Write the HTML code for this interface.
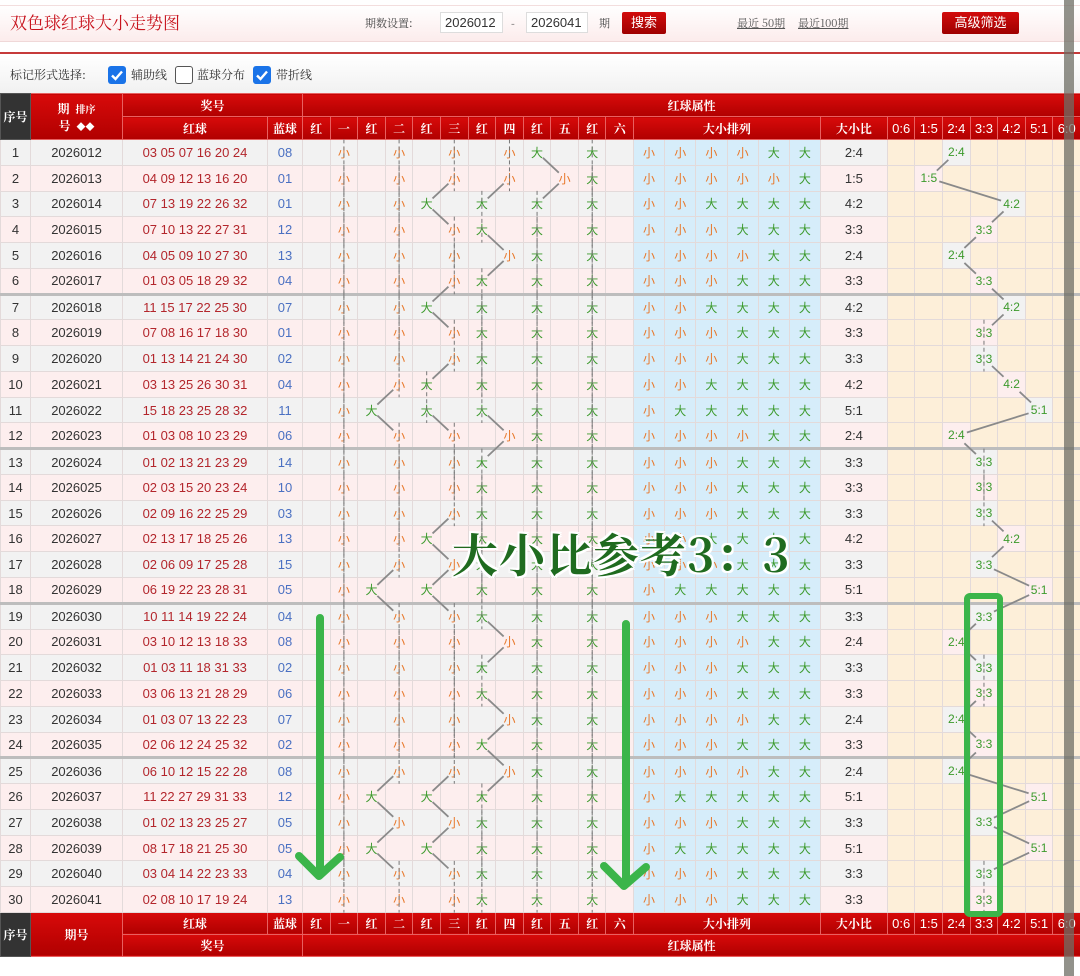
<!DOCTYPE html>
<html><head><meta charset="utf-8">
<style>
*{box-sizing:border-box;margin:0;padding:0}
body{width:1080px;height:976px;background:#fff;font-family:"Liberation Sans","Noto Sans CJK SC",sans-serif;position:relative;overflow:hidden}
.top{position:absolute;left:0;top:5px;width:1080px;height:37px;background:linear-gradient(#fff,#fcecec);border-top:1px solid #f3dede;border-bottom:1px solid #f0d8d8}
.title{position:absolute;left:10px;top:9px;font:17px "Noto Serif CJK SC",serif;color:#c8141e}
.t{position:absolute;font-size:11px;color:#444;font-family:"Noto Serif CJK SC",serif}
.inp{position:absolute;top:12px;height:21px;border:1px solid #ddd;background:#fff;font-size:13px;color:#333;padding:2px 0 0 4px}
.btn{position:absolute;top:12px;height:22px;background:linear-gradient(#d20c0c,#9e0000);color:#fff;font-size:13px;text-align:center;line-height:22px;border-radius:2px}
.redline{position:absolute;left:0;top:52px;width:1080px;height:2px;background:#c63a3a}
.opt{position:absolute;left:0;top:55px;width:1080px;height:38px;background:linear-gradient(#fff,#f1f1f1)}
.cb{position:absolute;top:66px;width:18px;height:18px;border-radius:3px}
.cb.on{background:#1a73e8}
.cb.off{border:1.5px solid #555;background:#fff}
.ot{position:absolute;top:66px;font:12px "Noto Serif CJK SC",serif;color:#333}
table{position:absolute;left:0;top:93px;border-collapse:collapse;table-layout:fixed;width:1080px}
th{background:linear-gradient(#d80a0a,#b00000);color:#fff;font:bold 12px "Noto Serif CJK SC",serif;border:1px solid #e86060;height:23px;padding:0;white-space:nowrap;overflow:hidden}
th.dk{background:#333;border-color:#555}
th.n{font:13px "Liberation Sans",sans-serif}
tfoot th{height:22px}
td{height:25.77px;text-align:center;border:1px solid #e3dada;font-size:13px;color:#333;padding:0;white-space:nowrap;overflow:hidden}
tbody tr:nth-child(odd){background:#f2f2f2}
tbody tr:nth-child(even){background:#fdeeee}
td:nth-child(3){color:#b3262c}
td:nth-child(4){color:#4a70c2}
td:nth-child(n+17):nth-child(-n+22){background:#d6edfa}
td:nth-child(n+24){background:#fdefd9}
td:nth-child(n+24).g{background:transparent;font-size:12px}
td.o{color:#e8782a;font-family:"Noto Sans CJK SC",sans-serif;font-size:12px}
td.g{color:#3c9a2c;font-family:"Noto Sans CJK SC",sans-serif;font-size:12px}
td:nth-child(n+24).g{font-family:"Liberation Sans",sans-serif}
tr.s td{border-bottom:3px solid #bdbdbd}
#ln{position:absolute;left:0;top:0}
.ann{position:absolute;left:452px;top:520px;font:bold 46px "Noto Serif CJK SC",serif;color:#1f6b1f;letter-spacing:1px;text-shadow:-2px -2px 0 #fff,2px -2px 0 #fff,-2px 2px 0 #fff,2px 2px 0 #fff,0 2px 0 #fff,0 -2px 0 #fff,2px 0 0 #fff,-2px 0 0 #fff}
.sb{position:absolute;left:1064px;top:0;width:10px;height:976px;background:rgba(110,110,100,.75)}
</style></head><body>
<div class="top"></div>
<div class="title">双色球红球大小走势图</div>
<div class="t" style="left:365px;top:15px">期数设置:</div>
<div class="inp" style="left:440px;width:63px">2026012</div>
<div class="t" style="left:511px;top:15px">-</div>
<div class="inp" style="left:526px;width:62px">2026041</div>
<div class="t" style="left:599px;top:15px">期</div>
<div class="btn" style="left:622px;width:44px">搜索</div>
<div class="t" style="left:737px;top:15px;text-decoration:underline;color:#555">最近 50期</div>
<div class="t" style="left:798px;top:15px;text-decoration:underline;color:#555">最近100期</div>
<div class="btn" style="left:942px;width:77px">高级筛选</div>
<div class="redline"></div>
<div class="opt"></div>
<div class="ot" style="left:10px">标记形式选择:</div>
<div class="cb on" style="left:108px"><svg width="18" height="18"><path d="M4 9.5l3.5 3.5L14 5.5" stroke="#fff" stroke-width="2.4" fill="none"/></svg></div>
<div class="ot" style="left:131px">辅助线</div>
<div class="cb off" style="left:175px"></div>
<div class="ot" style="left:197px">蓝球分布</div>
<div class="cb on" style="left:253px"><svg width="18" height="18"><path d="M4 9.5l3.5 3.5L14 5.5" stroke="#fff" stroke-width="2.4" fill="none"/></svg></div>
<div class="ot" style="left:276px">带折线</div>

<table id="tb">
<colgroup><col style="width:30px"><col style="width:92px"><col style="width:145px"><col style="width:35px">
<col style="width:27.6px"><col style="width:27.6px"><col style="width:27.6px"><col style="width:27.6px"><col style="width:27.6px"><col style="width:27.6px"><col style="width:27.6px"><col style="width:27.6px"><col style="width:27.6px"><col style="width:27.6px"><col style="width:27.5px"><col style="width:27.5px">
<col style="width:31.2px"><col style="width:31.2px"><col style="width:31.2px"><col style="width:31.2px"><col style="width:31.1px"><col style="width:31.1px">
<col style="width:67px">
<col style="width:27.6px"><col style="width:27.6px"><col style="width:27.6px"><col style="width:27.6px"><col style="width:27.6px"><col style="width:27.5px"><col style="width:27.5px">
</colgroup>
<thead>
<tr><th rowspan="2" class="dk">序号</th><th rowspan="2">期&nbsp;&nbsp;<span style="font-size:10px">排序</span><br>号&nbsp;&nbsp;<span style="font-size:9px">◆◆</span></th><th colspan="2">奖号</th><th colspan="26">红球属性</th></tr>
<tr><th>红球</th><th>蓝球</th><th>红</th><th>一</th><th>红</th><th>二</th><th>红</th><th>三</th><th>红</th><th>四</th><th>红</th><th>五</th><th>红</th><th>六</th><th colspan="6">大小排列</th><th>大小比</th><th class="n">0:6</th><th class="n">1:5</th><th class="n">2:4</th><th class="n">3:3</th><th class="n">4:2</th><th class="n">5:1</th><th class="n">6:0</th></tr>
</thead>
<tbody>
<tr><td>1<td>2026012<td>03 05 07 16 20 24<td>08<td><td class=o>小<td><td class=o>小<td><td class=o>小<td><td class=o>小<td class=g>大<td><td class=g>大<td><td class=o>小<td class=o>小<td class=o>小<td class=o>小<td class=g>大<td class=g>大<td>2:4<td><td><td class=g>2:4<td><td><td><td></tr>
<tr><td>2<td>2026013<td>04 09 12 13 16 20<td>01<td><td class=o>小<td><td class=o>小<td><td class=o>小<td><td class=o>小<td><td class=o>小<td class=g>大<td><td class=o>小<td class=o>小<td class=o>小<td class=o>小<td class=o>小<td class=g>大<td>1:5<td><td class=g>1:5<td><td><td><td><td></tr>
<tr><td>3<td>2026014<td>07 13 19 22 26 32<td>01<td><td class=o>小<td><td class=o>小<td class=g>大<td><td class=g>大<td><td class=g>大<td><td class=g>大<td><td class=o>小<td class=o>小<td class=g>大<td class=g>大<td class=g>大<td class=g>大<td>4:2<td><td><td><td><td class=g>4:2<td><td></tr>
<tr><td>4<td>2026015<td>07 10 13 22 27 31<td>12<td><td class=o>小<td><td class=o>小<td><td class=o>小<td class=g>大<td><td class=g>大<td><td class=g>大<td><td class=o>小<td class=o>小<td class=o>小<td class=g>大<td class=g>大<td class=g>大<td>3:3<td><td><td><td class=g>3:3<td><td><td></tr>
<tr><td>5<td>2026016<td>04 05 09 10 27 30<td>13<td><td class=o>小<td><td class=o>小<td><td class=o>小<td><td class=o>小<td class=g>大<td><td class=g>大<td><td class=o>小<td class=o>小<td class=o>小<td class=o>小<td class=g>大<td class=g>大<td>2:4<td><td><td class=g>2:4<td><td><td><td></tr>
<tr class=s><td>6<td>2026017<td>01 03 05 18 29 32<td>04<td><td class=o>小<td><td class=o>小<td><td class=o>小<td class=g>大<td><td class=g>大<td><td class=g>大<td><td class=o>小<td class=o>小<td class=o>小<td class=g>大<td class=g>大<td class=g>大<td>3:3<td><td><td><td class=g>3:3<td><td><td></tr>
<tr><td>7<td>2026018<td>11 15 17 22 25 30<td>07<td><td class=o>小<td><td class=o>小<td class=g>大<td><td class=g>大<td><td class=g>大<td><td class=g>大<td><td class=o>小<td class=o>小<td class=g>大<td class=g>大<td class=g>大<td class=g>大<td>4:2<td><td><td><td><td class=g>4:2<td><td></tr>
<tr><td>8<td>2026019<td>07 08 16 17 18 30<td>01<td><td class=o>小<td><td class=o>小<td><td class=o>小<td class=g>大<td><td class=g>大<td><td class=g>大<td><td class=o>小<td class=o>小<td class=o>小<td class=g>大<td class=g>大<td class=g>大<td>3:3<td><td><td><td class=g>3:3<td><td><td></tr>
<tr><td>9<td>2026020<td>01 13 14 21 24 30<td>02<td><td class=o>小<td><td class=o>小<td><td class=o>小<td class=g>大<td><td class=g>大<td><td class=g>大<td><td class=o>小<td class=o>小<td class=o>小<td class=g>大<td class=g>大<td class=g>大<td>3:3<td><td><td><td class=g>3:3<td><td><td></tr>
<tr><td>10<td>2026021<td>03 13 25 26 30 31<td>04<td><td class=o>小<td><td class=o>小<td class=g>大<td><td class=g>大<td><td class=g>大<td><td class=g>大<td><td class=o>小<td class=o>小<td class=g>大<td class=g>大<td class=g>大<td class=g>大<td>4:2<td><td><td><td><td class=g>4:2<td><td></tr>
<tr><td>11<td>2026022<td>15 18 23 25 28 32<td>11<td><td class=o>小<td class=g>大<td><td class=g>大<td><td class=g>大<td><td class=g>大<td><td class=g>大<td><td class=o>小<td class=g>大<td class=g>大<td class=g>大<td class=g>大<td class=g>大<td>5:1<td><td><td><td><td><td class=g>5:1<td></tr>
<tr class=s><td>12<td>2026023<td>01 03 08 10 23 29<td>06<td><td class=o>小<td><td class=o>小<td><td class=o>小<td><td class=o>小<td class=g>大<td><td class=g>大<td><td class=o>小<td class=o>小<td class=o>小<td class=o>小<td class=g>大<td class=g>大<td>2:4<td><td><td class=g>2:4<td><td><td><td></tr>
<tr><td>13<td>2026024<td>01 02 13 21 23 29<td>14<td><td class=o>小<td><td class=o>小<td><td class=o>小<td class=g>大<td><td class=g>大<td><td class=g>大<td><td class=o>小<td class=o>小<td class=o>小<td class=g>大<td class=g>大<td class=g>大<td>3:3<td><td><td><td class=g>3:3<td><td><td></tr>
<tr><td>14<td>2026025<td>02 03 15 20 23 24<td>10<td><td class=o>小<td><td class=o>小<td><td class=o>小<td class=g>大<td><td class=g>大<td><td class=g>大<td><td class=o>小<td class=o>小<td class=o>小<td class=g>大<td class=g>大<td class=g>大<td>3:3<td><td><td><td class=g>3:3<td><td><td></tr>
<tr><td>15<td>2026026<td>02 09 16 22 25 29<td>03<td><td class=o>小<td><td class=o>小<td><td class=o>小<td class=g>大<td><td class=g>大<td><td class=g>大<td><td class=o>小<td class=o>小<td class=o>小<td class=g>大<td class=g>大<td class=g>大<td>3:3<td><td><td><td class=g>3:3<td><td><td></tr>
<tr><td>16<td>2026027<td>02 13 17 18 25 26<td>13<td><td class=o>小<td><td class=o>小<td class=g>大<td><td class=g>大<td><td class=g>大<td><td class=g>大<td><td class=o>小<td class=o>小<td class=g>大<td class=g>大<td class=g>大<td class=g>大<td>4:2<td><td><td><td><td class=g>4:2<td><td></tr>
<tr><td>17<td>2026028<td>02 06 09 17 25 28<td>15<td><td class=o>小<td><td class=o>小<td><td class=o>小<td class=g>大<td><td class=g>大<td><td class=g>大<td><td class=o>小<td class=o>小<td class=o>小<td class=g>大<td class=g>大<td class=g>大<td>3:3<td><td><td><td class=g>3:3<td><td><td></tr>
<tr class=s><td>18<td>2026029<td>06 19 22 23 28 31<td>05<td><td class=o>小<td class=g>大<td><td class=g>大<td><td class=g>大<td><td class=g>大<td><td class=g>大<td><td class=o>小<td class=g>大<td class=g>大<td class=g>大<td class=g>大<td class=g>大<td>5:1<td><td><td><td><td><td class=g>5:1<td></tr>
<tr><td>19<td>2026030<td>10 11 14 19 22 24<td>04<td><td class=o>小<td><td class=o>小<td><td class=o>小<td class=g>大<td><td class=g>大<td><td class=g>大<td><td class=o>小<td class=o>小<td class=o>小<td class=g>大<td class=g>大<td class=g>大<td>3:3<td><td><td><td class=g>3:3<td><td><td></tr>
<tr><td>20<td>2026031<td>03 10 12 13 18 33<td>08<td><td class=o>小<td><td class=o>小<td><td class=o>小<td><td class=o>小<td class=g>大<td><td class=g>大<td><td class=o>小<td class=o>小<td class=o>小<td class=o>小<td class=g>大<td class=g>大<td>2:4<td><td><td class=g>2:4<td><td><td><td></tr>
<tr><td>21<td>2026032<td>01 03 11 18 31 33<td>02<td><td class=o>小<td><td class=o>小<td><td class=o>小<td class=g>大<td><td class=g>大<td><td class=g>大<td><td class=o>小<td class=o>小<td class=o>小<td class=g>大<td class=g>大<td class=g>大<td>3:3<td><td><td><td class=g>3:3<td><td><td></tr>
<tr><td>22<td>2026033<td>03 06 13 21 28 29<td>06<td><td class=o>小<td><td class=o>小<td><td class=o>小<td class=g>大<td><td class=g>大<td><td class=g>大<td><td class=o>小<td class=o>小<td class=o>小<td class=g>大<td class=g>大<td class=g>大<td>3:3<td><td><td><td class=g>3:3<td><td><td></tr>
<tr><td>23<td>2026034<td>01 03 07 13 22 23<td>07<td><td class=o>小<td><td class=o>小<td><td class=o>小<td><td class=o>小<td class=g>大<td><td class=g>大<td><td class=o>小<td class=o>小<td class=o>小<td class=o>小<td class=g>大<td class=g>大<td>2:4<td><td><td class=g>2:4<td><td><td><td></tr>
<tr class=s><td>24<td>2026035<td>02 06 12 24 25 32<td>02<td><td class=o>小<td><td class=o>小<td><td class=o>小<td class=g>大<td><td class=g>大<td><td class=g>大<td><td class=o>小<td class=o>小<td class=o>小<td class=g>大<td class=g>大<td class=g>大<td>3:3<td><td><td><td class=g>3:3<td><td><td></tr>
<tr><td>25<td>2026036<td>06 10 12 15 22 28<td>08<td><td class=o>小<td><td class=o>小<td><td class=o>小<td><td class=o>小<td class=g>大<td><td class=g>大<td><td class=o>小<td class=o>小<td class=o>小<td class=o>小<td class=g>大<td class=g>大<td>2:4<td><td><td class=g>2:4<td><td><td><td></tr>
<tr><td>26<td>2026037<td>11 22 27 29 31 33<td>12<td><td class=o>小<td class=g>大<td><td class=g>大<td><td class=g>大<td><td class=g>大<td><td class=g>大<td><td class=o>小<td class=g>大<td class=g>大<td class=g>大<td class=g>大<td class=g>大<td>5:1<td><td><td><td><td><td class=g>5:1<td></tr>
<tr><td>27<td>2026038<td>01 02 13 23 25 27<td>05<td><td class=o>小<td><td class=o>小<td><td class=o>小<td class=g>大<td><td class=g>大<td><td class=g>大<td><td class=o>小<td class=o>小<td class=o>小<td class=g>大<td class=g>大<td class=g>大<td>3:3<td><td><td><td class=g>3:3<td><td><td></tr>
<tr><td>28<td>2026039<td>08 17 18 21 25 30<td>05<td><td class=o>小<td class=g>大<td><td class=g>大<td><td class=g>大<td><td class=g>大<td><td class=g>大<td><td class=o>小<td class=g>大<td class=g>大<td class=g>大<td class=g>大<td class=g>大<td>5:1<td><td><td><td><td><td class=g>5:1<td></tr>
<tr><td>29<td>2026040<td>03 04 14 22 23 33<td>04<td><td class=o>小<td><td class=o>小<td><td class=o>小<td class=g>大<td><td class=g>大<td><td class=g>大<td><td class=o>小<td class=o>小<td class=o>小<td class=g>大<td class=g>大<td class=g>大<td>3:3<td><td><td><td class=g>3:3<td><td><td></tr>
<tr><td>30<td>2026041<td>02 08 10 17 19 24<td>13<td><td class=o>小<td><td class=o>小<td><td class=o>小<td class=g>大<td><td class=g>大<td><td class=g>大<td><td class=o>小<td class=o>小<td class=o>小<td class=g>大<td class=g>大<td class=g>大<td>3:3<td><td><td><td class=g>3:3<td><td><td></tr>
</tbody>
<tfoot>
<tr><th rowspan="2" class="dk">序号</th><th rowspan="2">期号</th><th>红球</th><th>蓝球</th><th>红</th><th>一</th><th>红</th><th>二</th><th>红</th><th>三</th><th>红</th><th>四</th><th>红</th><th>五</th><th>红</th><th>六</th><th colspan="6">大小排列</th><th>大小比</th><th class="n">0:6</th><th class="n">1:5</th><th class="n">2:4</th><th class="n">3:3</th><th class="n">4:2</th><th class="n">5:1</th><th class="n">6:0</th></tr>
<tr><th colspan="2">奖号</th><th colspan="26">红球属性</th></tr>
</tfoot>
</table>
<svg id="ln" width="1080" height="976"></svg>
<div class="ann">大小比参考3：3</div>
<svg style="position:absolute;left:0;top:0" width="1080" height="976">
<g stroke="#3bb54a" stroke-width="8" fill="none" stroke-linecap="round" stroke-linejoin="round">
<path d="M320 618V874M299 856L319 876L340 857"/>
<path d="M626 624V884M604 866L624 886L646 867"/>
<rect x="967" y="596" width="33" height="318" rx="3" stroke-width="6"/>
</g></svg>
<div class="sb"></div>
<script>
(function(){
var rows=document.querySelectorAll('#tb tbody tr'),svg=document.getElementById('ln'),ns='http://www.w3.org/2000/svg';
function c(td){var r=td.getBoundingClientRect();return [r.left+r.width/2,r.top+r.height/2];}
var prev=null;
rows.forEach(function(tr){
 var cs=tr.children,pts=[];
 for(var p=0;p<6;p++){var a=cs[4+2*p],b=cs[5+2*p];pts.push(c(a.textContent?a:b));}
 for(var k=23;k<30;k++){if(cs[k].textContent){pts.push(c(cs[k]));break;}}
 if(prev){for(var i=0;i<pts.length;i++){
  var x1=prev[i][0],y1=prev[i][1],x2=pts[i][0],y2=pts[i][1],l=document.createElementNS(ns,'line');
  var dx=x2-x1,dy=y2-y1,d=Math.sqrt(dx*dx+dy*dy),s=(Math.abs(dx)<1?8:(i==6?11:8))/d;
  l.setAttribute('x1',x1+dx*s);l.setAttribute('y1',y1+dy*s);l.setAttribute('x2',x2-dx*s);l.setAttribute('y2',y2-dy*s);
  if(Math.abs(dx)<1){l.setAttribute('stroke','#777');l.setAttribute('stroke-width','1');l.setAttribute('stroke-dasharray','4,3');
   l.setAttribute('y1',y1-13);l.setAttribute('y2',y2+13);}
  else{l.setAttribute('stroke','#8a8a8a');l.setAttribute('stroke-width','1.8');}
  svg.appendChild(l);}}
 prev=pts;});
})();
</script>
</body></html>
